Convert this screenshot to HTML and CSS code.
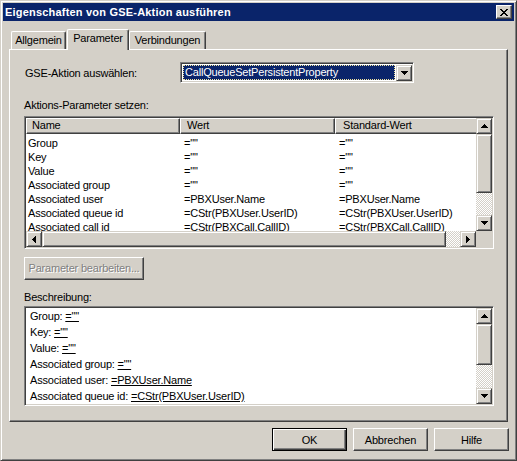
FILE: index.html
```html
<!DOCTYPE html>
<html lang="de">
<head>
<meta charset="utf-8">
<title>Eigenschaften von GSE-Aktion ausführen</title>
<link rel="stylesheet" href="styles.css">
</head>
<body>
<div class="window">
  <div class="titlebar">
    <span class="title">Eigenschaften von GSE-Aktion ausführen</span>
    <div class="close">
      <svg width="8" height="7" viewBox="0 0 8 7" shape-rendering="crispEdges"><path d="M0 0h2v1h1v1h2V1h1V0h2v1H7v1H6v1H5v1h1v1h1v1h1v1H6V6H5V5H3v1H2v1H0V6h1V5h1V4h1V3H2V2H1V1H0z" fill="#000"/></svg>
    </div>
  </div>

  <div class="tabs">
    <div class="tab tab-first">Allgemein</div>
    <div class="tab tab-active">Parameter</div>
    <div class="tab tab-last">Verbindungen</div>
  </div>

  <div class="panel">
    <div class="select-row">
      <span class="select-label">GSE-Aktion auswählen:</span>
      <div class="combo">
        <div class="combo-inner">
          <div class="combo-field">CallQueueSetPersistentProperty</div>
          <div class="sbtn combo-btn">
            <svg width="7" height="4" viewBox="0 0 7 4" shape-rendering="crispEdges"><path d="M0 0h7v1H6v1H5v1H4v1H3V3H2V2H1V1H0z"/></svg>
          </div>
        </div>
      </div>
    </div>

    <div class="label label-params">Aktions-Parameter setzen:</div>

    <div class="sunken listbox">
      <div class="list-top">
        <div class="listview">
          <div class="list-header">
            <div class="hcell c1">Name</div>
            <div class="hcell c2">Wert</div>
            <div class="hcell c3">Standard-Wert</div>
          </div>
          <div class="rows">
            <div class="row"><span class="c1">Group</span><span class="c2">=""</span><span class="c3">=""</span></div>
            <div class="row"><span class="c1">Key</span><span class="c2">=""</span><span class="c3">=""</span></div>
            <div class="row"><span class="c1">Value</span><span class="c2">=""</span><span class="c3">=""</span></div>
            <div class="row"><span class="c1">Associated group</span><span class="c2">=""</span><span class="c3">=""</span></div>
            <div class="row"><span class="c1">Associated user</span><span class="c2">=PBXUser.Name</span><span class="c3">=PBXUser.Name</span></div>
            <div class="row"><span class="c1">Associated queue id</span><span class="c2">=CStr(PBXUser.UserID)</span><span class="c3">=CStr(PBXUser.UserID)</span></div>
            <div class="row"><span class="c1">Associated call id</span><span class="c2">=CStr(PBXCall.CallID)</span><span class="c3">=CStr(PBXCall.CallID)</span></div>
          </div>
        </div>
        <div class="vscroll vs-list">
          <div class="sbtn"><svg width="7" height="4" viewBox="0 0 7 4" shape-rendering="crispEdges"><path d="M3 0h1v1h1v1h1v1h1v1H0V3h1V2h1V1h1z"/></svg></div>
          <div class="sbtn thumb"></div>
          <div class="track"></div>
          <div class="sbtn"><svg width="7" height="4" viewBox="0 0 7 4" shape-rendering="crispEdges"><path d="M0 0h7v1H6v1H5v1H4v1H3V3H2V2H1V1H0z"/></svg></div>
        </div>
      </div>
      <div class="list-bottom">
        <div class="hscroll">
          <div class="sbtn"><svg width="4" height="7" viewBox="0 0 4 7" shape-rendering="crispEdges"><path d="M4 0v7H3V6H2V5H1V4H0V3h1V2h1V1h1V0z"/></svg></div>
          <div class="sbtn hthumb"></div>
          <div class="track"></div>
          <div class="sbtn"><svg width="4" height="7" viewBox="0 0 4 7" shape-rendering="crispEdges"><path d="M0 0h1v1h1v1h1v1h1v1H3v1H2v1H1v1H0z"/></svg></div>
        </div>
        <div class="corner"></div>
      </div>
    </div>

    <div class="pbtn disabled">Parameter bearbeiten...</div>

    <div class="label label-desc">Beschreibung:</div>

    <div class="sunken descbox">
      <div class="desc-text">
        <div>Group: <u>=""</u></div>
        <div>Key: <u>=""</u></div>
        <div>Value: <u>=""</u></div>
        <div>Associated group: <u>=""</u></div>
        <div>Associated user: <u>=PBXUser.Name</u></div>
        <div>Associated queue id: <u>=CStr(PBXUser.UserID)</u></div>
      </div>
      <div class="vscroll vs-desc">
        <div class="sbtn"><svg width="7" height="4" viewBox="0 0 7 4" shape-rendering="crispEdges"><path d="M3 0h1v1h1v1h1v1h1v1H0V3h1V2h1V1h1z"/></svg></div>
        <div class="sbtn thumb"></div>
        <div class="track"></div>
        <div class="sbtn"><svg width="7" height="4" viewBox="0 0 7 4" shape-rendering="crispEdges"><path d="M0 0h7v1H6v1H5v1H4v1H3V3H2V2H1V1H0z"/></svg></div>
      </div>
    </div>
  </div>

  <div class="footer">
    <div class="pbtn fbtn default">OK</div>
    <div class="pbtn fbtn">Abbrechen</div>
    <div class="pbtn fbtn">Hilfe</div>
  </div>
</div>
</body>
</html>
```
FILE: styles.css
```css
* { box-sizing: border-box; }

body {
  margin: 0;
  background: #d4d0c8;
  font-family: "Liberation Sans", Arial, sans-serif;
  font-size: 11px;
  letter-spacing: -0.2px;
  color: #000;
}

.window {
  width: 517px;
  height: 461px;
  border: 1px solid;
  border-color: #d4d0c8 #404040 #404040 #d4d0c8;
  box-shadow: inset 1px 1px #fff, inset -1px -1px #808080;
  padding: 2px;
  display: flex;
  flex-direction: column;
  background: #d4d0c8;
}

.titlebar {
  height: 18px;
  background: #0a246a;
  color: #fff;
  display: flex;
  align-items: center;
  padding-left: 2px;
  flex: none;
}
.title {
  font-weight: bold;
  font-size: 11px;
  letter-spacing: 0.2px;
  line-height: 14px;
}
.close {
  margin-left: auto;
  margin-right: 2px;
  width: 16px;
  height: 14px;
  background: #d4d0c8;
  border: 1px solid;
  border-color: #fff #404040 #404040 #fff;
  box-shadow: inset -1px -1px #808080;
  display: flex;
  align-items: center;
  justify-content: center;
  padding-right: 1px;
}

/* tabs */
.tabs {
  flex: none;
  margin: 8px 6px 0;
  height: 20px;
  display: flex;
  align-items: flex-end;
  padding-left: 2px;
  position: relative;
  z-index: 1;
}
.tab {
  height: 18px;
  border-top: 1px solid #fff;
  border-left: 1px solid #fff;
  border-right: 1px solid #404040;
  box-shadow: inset -1px 0 #808080;
  border-radius: 2px 2px 0 0;
  display: flex;
  align-items: center;
  justify-content: center;
  line-height: 13px;
  background: #d4d0c8;
}
.tab-first { width: 55px; }
.tab-active {
  width: 62px;
  height: 21px;
  margin-left: 1px;
  margin-bottom: -1px;
  padding-bottom: 3px;
}
.tab-last { width: 77px; }

/* panel */
.panel {
  flex: none;
  margin: 0 6px;
  height: 373px;
  border: 1px solid;
  border-color: #fff #404040 #404040 #fff;
  box-shadow: inset -1px -1px #808080;
  padding: 12px 12px 0 14px;
  display: flex;
  flex-direction: column;
  align-items: flex-start;
}

.select-row {
  display: flex;
  align-items: center;
  height: 21px;
}
.select-label {
  width: 156px;
  padding-left: 1px;
  padding-top: 1px;
}

.sunken {
  border: 1px solid;
  border-color: #808080 #fff #fff #808080;
  box-shadow: inset 1px 1px #404040, inset -1px -1px #d4d0c8;
  padding: 1px;
}

.combo {
  width: 234px;
  height: 21px;
  border: 1px solid;
  border-color: #808080 #fff #fff #808080;
  box-shadow: inset 1px 1px #404040, inset -1px -1px #d4d0c8;
  padding: 1px;
}
.combo-inner {
  height: 17px;
  background: #fff;
  display: flex;
  align-items: center;
}
.combo-field {
  margin-left: 1px;
  width: 212px;
  height: 15px;
  background: #0a246a;
  color: #fff;
  border: 1px dotted #f0e4a0;
  line-height: 13px;
  padding-left: 1px;
  white-space: nowrap;
  overflow: hidden;
}
.combo-btn {
  margin-left: 1px;
  width: 16px;
  height: 17px;
}

.sbtn {
  flex: none;
  width: 16px;
  height: 16px;
  background: #d4d0c8;
  border: 1px solid;
  border-color: #d4d0c8 #404040 #404040 #d4d0c8;
  box-shadow: inset 1px 1px #fff, inset -1px -1px #808080;
  display: flex;
  align-items: center;
  justify-content: center;
}
.sbtn svg { display: block; fill: #000; }

.label {
  line-height: 13px;
}
.label-params { margin-top: 16px; }
.label-desc { margin-top: 11px; }

/* list box */
.listbox {
  margin-top: 4px;
  width: 470px;
  height: 133px;
  display: flex;
  flex-direction: column;
  background: #fff;
}
.list-top {
  display: flex;
  height: 113px;
}
.listview {
  width: 450px;
  overflow: hidden;
  background: #fff;
}
.list-header {
  display: flex;
  height: 16px;
  width: 600px;
}
.hcell {
  flex: none;
  height: 16px;
  background: #d4d0c8;
  border: 1px solid;
  border-color: #fff #404040 #404040 #fff;
  box-shadow: inset -1px -1px #808080;
  line-height: 13px;
  padding-left: 5px;
}
.list-header .c1 { width: 154px; }
.list-header .c2 { width: 155px; padding-left: 6px; }
.list-header .c3 { width: 200px; padding-left: 7px; }

.rows { padding-top: 2px; }
.row {
  display: flex;
  height: 14px;
  line-height: 14px;
  white-space: nowrap;
}
.row span { flex: none; overflow: hidden; }
.row .c1 { width: 154px; padding-left: 2px; }
.row .c2 { width: 155px; padding-left: 4px; }
.row .c3 { width: 141px; padding-left: 4px; }

.vscroll {
  width: 16px;
  display: flex;
  flex-direction: column;
  flex: none;
}
.track {
  flex: 1;
  background-color: #d4d0c8;
  background-image: conic-gradient(#fff 25%, #d4d0c8 0 50%, #fff 0 75%, #d4d0c8 0);
  background-size: 2px 2px;
}
.vs-list .thumb { height: 59px; }
.vs-desc .thumb { height: 41px; }

.list-bottom {
  display: flex;
  height: 16px;
}
.hscroll {
  width: 450px;
  display: flex;
}
.hthumb { width: 404px; }
.corner {
  width: 16px;
  background: #d4d0c8;
}

/* push buttons */
.pbtn {
  background: #d4d0c8;
  border: 1px solid;
  border-color: #fff #404040 #404040 #fff;
  box-shadow: inset -1px -1px #808080;
  display: flex;
  align-items: center;
  justify-content: center;
  line-height: 13px;
}
.pbtn.disabled {
  margin-top: 8px;
  width: 120px;
  height: 23px;
  color: #808080;
  text-shadow: 1px 1px #fff;
}

/* description */
.descbox {
  margin-top: 2px;
  width: 470px;
  height: 100px;
  display: flex;
  background: #fff;
}
.desc-text {
  flex: 1;
  padding-left: 4px;
  line-height: 16px;
  white-space: nowrap;
  overflow: hidden;
}
.desc-text u { text-underline-offset: 1px; }

/* footer */
.footer {
  flex: none;
  margin-top: 6px;
  height: 23px;
  display: flex;
  justify-content: flex-end;
  gap: 6px;
  padding-right: 5px;
}
.fbtn {
  width: 75px;
  height: 23px;
  padding-top: 1px;
}
.fbtn.default {
  border: 1px solid #000;
  box-shadow: inset 1px 1px #fff, inset -1px -1px #404040, inset -2px -2px #808080;
}
```
